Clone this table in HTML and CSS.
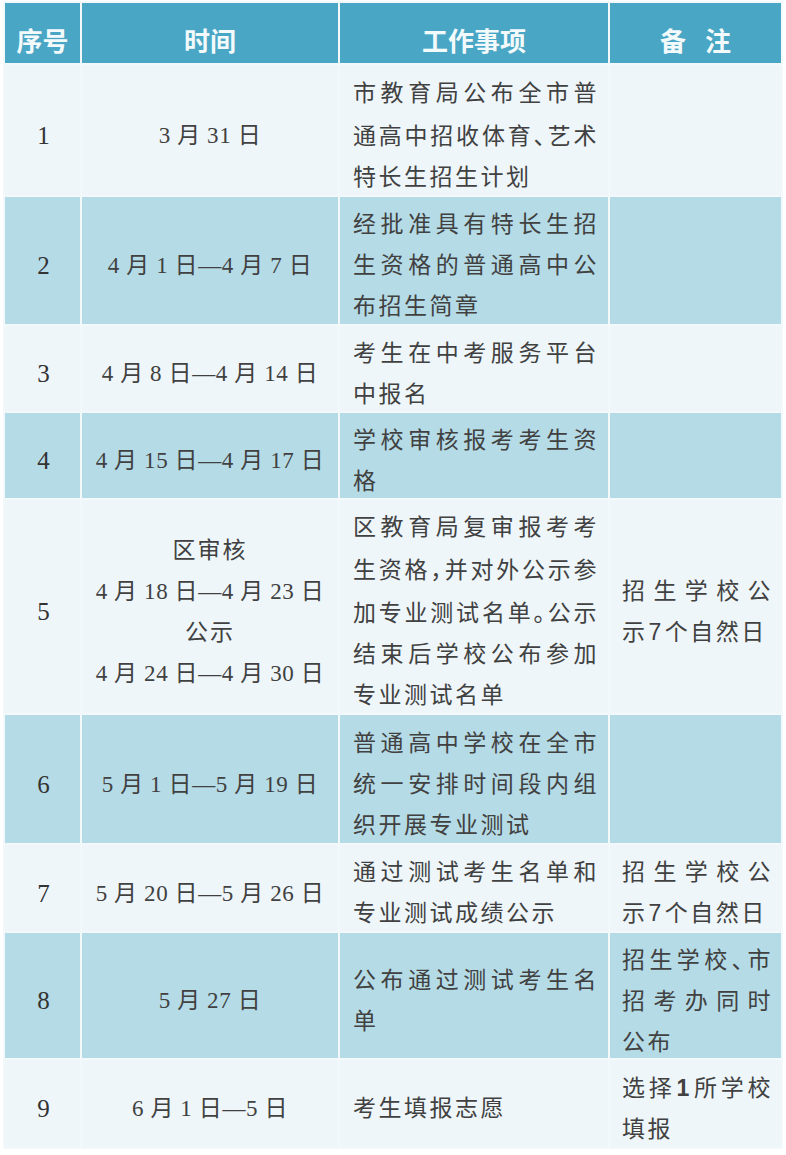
FILE: index.html
```html
<!DOCTYPE html>
<html lang="zh-CN">
<head>
<meta charset="utf-8">
<title>特长生招生工作日程</title>
<link rel="stylesheet" href="styles.css">
</head>
<body>
<div class="tbl">
  <div class="h">序号</div>
  <div class="h">时间</div>
  <div class="h">工作事项</div>
  <div class="h">备<span class="gap"></span>注</div>

  <div class="c no lt">1</div>
  <div class="c tm lt"><div>3 月 31 日</div></div>
  <div class="c wk lt">
    <div class="j">市教育局公布全市普</div>
    <div class="j">通高中招收体育<span class="p">、</span>艺术</div>
    <div>特长生招生计划</div>
  </div>
  <div class="c rm lt"></div>

  <div class="c no dk">2</div>
  <div class="c tm dk"><div>4 月 1 日—4 月 7 日</div></div>
  <div class="c wk dk">
    <div class="j">经批准具有特长生招</div>
    <div class="j">生资格的普通高中公</div>
    <div>布招生简章</div>
  </div>
  <div class="c rm dk"></div>

  <div class="c no lt">3</div>
  <div class="c tm lt"><div>4 月 8 日—4 月 14 日</div></div>
  <div class="c wk lt">
    <div class="j">考生在中考服务平台</div>
    <div>中报名</div>
  </div>
  <div class="c rm lt"></div>

  <div class="c no dk">4</div>
  <div class="c tm dk"><div>4 月 15 日—4 月 17 日</div></div>
  <div class="c wk dk">
    <div class="j">学校审核报考考生资</div>
    <div>格</div>
  </div>
  <div class="c rm dk"></div>

  <div class="c no lt">5</div>
  <div class="c tm lt">
    <div class="cn">区审核</div>
    <div>4 月 18 日—4 月 23 日</div>
    <div class="cn">公示</div>
    <div>4 月 24 日—4 月 30 日</div>
  </div>
  <div class="c wk lt">
    <div class="j">区教育局复审报考考</div>
    <div class="j">生资格<span class="p">，</span>并对外公示参</div>
    <div class="j">加专业测试名单<span class="p">。</span>公示</div>
    <div class="j">结束后学校公布参加</div>
    <div>专业测试名单</div>
  </div>
  <div class="c rm lt">
    <div class="j">招生学校公</div>
    <div>示<span class="d">7</span>个自然日</div>
  </div>

  <div class="c no dk">6</div>
  <div class="c tm dk"><div>5 月 1 日—5 月 19 日</div></div>
  <div class="c wk dk">
    <div class="j">普通高中学校在全市</div>
    <div class="j">统一安排时间段内组</div>
    <div>织开展专业测试</div>
  </div>
  <div class="c rm dk"></div>

  <div class="c no lt">7</div>
  <div class="c tm lt"><div>5 月 20 日—5 月 26 日</div></div>
  <div class="c wk lt">
    <div class="j">通过测试考生名单和</div>
    <div>专业测试成绩公示</div>
  </div>
  <div class="c rm lt">
    <div class="j">招生学校公</div>
    <div>示<span class="d">7</span>个自然日</div>
  </div>

  <div class="c no dk">8</div>
  <div class="c tm dk"><div>5 月 27 日</div></div>
  <div class="c wk dk">
    <div class="j">公布通过测试考生名</div>
    <div>单</div>
  </div>
  <div class="c rm dk">
    <div class="j">招生学校<span class="p">、</span>市</div>
    <div class="j">招考办同时</div>
    <div>公布</div>
  </div>

  <div class="c no lt">9</div>
  <div class="c tm lt"><div>6 月 1 日—5 日</div></div>
  <div class="c wk lt">
    <div>考生填报志愿</div>
  </div>
  <div class="c rm lt">
    <div class="j">选择<span class="d b">1</span>所学校</div>
    <div>填报</div>
  </div>
</div>
</body>
</html>
```
FILE: styles.css
```css
html, body {
  margin: 0;
  padding: 0;
  background: #ffffff;
}

body {
  font-family: "Liberation Serif", "Noto Sans CJK SC", serif;
}

.tbl {
  display: grid;
  grid-template-columns: 75px 256px 268px 171px;
  grid-template-rows: 60px 130px 127px 85px 85px 213px 128px 86px 125px 87px;
  gap: 2px;
  padding: 2px;
  margin: 1px 0 0 3px;
  width: max-content;
  background: #f3f9fb;
}

.h {
  display: flex;
  align-items: center;
  justify-content: center;
  padding-top: 13px;
  box-sizing: border-box;
  background: #4aa6c5;
  color: #f3fafc;
  font-family: "Noto Sans CJK SC", sans-serif;
  font-weight: bold;
  font-size: 26px;
  line-height: 34px;
}

.h .gap {
  display: inline-block;
  width: 19px;
}

.c {
  display: flex;
  flex-direction: column;
  justify-content: center;
  box-sizing: border-box;
  padding-top: 10px;
  font-size: 23px;
  line-height: 41px;
  color: #414141;
}

.lt { background: #eef6fa; }
.dk { background: #b5dbe6; }

.no {
  align-items: center;
  padding-left: 2px;
  font-size: 25px;
  color: #333333;
}

.tm {
  align-items: center;
  text-align: center;
  letter-spacing: 0.6px;
}

.tm .cn {
  letter-spacing: 2px;
}

.wk {
  padding-left: 13px;
  padding-right: 9px;
  letter-spacing: 2.5px;
}

.rm {
  padding-left: 12px;
  padding-right: 8px;
  letter-spacing: 2.5px;
}

.j {
  text-align: justify;
  text-align-last: justify;
}

.p {
  font-family: "Noto Sans CJK SC", sans-serif;
  font-feature-settings: "halt";
}

.d {
  font-family: "Liberation Sans", sans-serif;
  margin: 0 1px;
}

.d.b {
  font-weight: bold;
}
```
